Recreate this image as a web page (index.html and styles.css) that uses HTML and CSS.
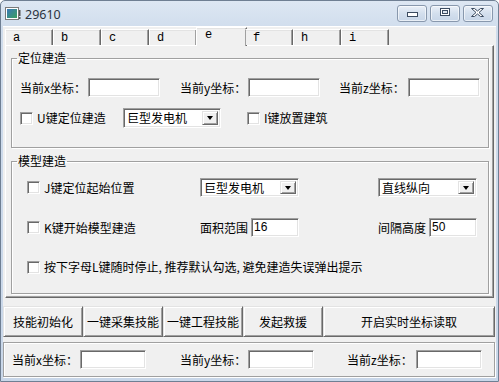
FILE: index.html
```html
<!DOCTYPE html>
<html>
<head>
<meta charset="utf-8">
<link rel="stylesheet" href="styles.css">
</head>
<body>
<div class="window">
  <div class="titlebar">
    <svg class="appicon" width="16" height="14" viewBox="0 0 16 14">
      <rect x="0.5" y="0.5" width="13" height="12" fill="#fff" stroke="#7a7a7a"/>
      <defs><linearGradient id="ig" x1="0" y1="0" x2="1" y2="1"><stop offset="0" stop-color="#3a78b8"/><stop offset="1" stop-color="#3aa060"/></linearGradient></defs>
      <rect x="2" y="2" width="10" height="9" fill="url(#ig)"/>
      <rect x="14" y="3" width="1.5" height="6" fill="#555"/>
      <rect x="14" y="10" width="1.5" height="2" fill="#555"/>
    </svg>
    <span class="title">29610</span>
    <div class="capbtns">
      <div class="capbtn">
        <svg width="30" height="17" viewBox="0 0 30 17"><rect x="10.5" y="7.5" width="10" height="4" fill="#fff" stroke="#3b4b60"/></svg>
      </div>
      <div class="capbtn">
        <svg width="30" height="17" viewBox="0 0 30 17"><rect x="10.5" y="3.5" width="9" height="7" fill="#fff" stroke="#3b4b60"/><rect x="12.5" y="5.5" width="5" height="3" fill="#dfe7f1" stroke="#3b4b60"/></svg>
      </div>
      <div class="capbtn">
        <svg width="30" height="17" viewBox="0 0 30 17"><path d="M8.5 3.5h3l3 2.5 3-2.5h3l-4.5 4 4.5 4h-3l-3-2.5-3 2.5h-3l4.5-4z" fill="#fff" stroke="#3b4b60" stroke-linejoin="round"/></svg>
      </div>
    </div>
  </div>
  <div class="client">
    <div class="tabctl">
      <div class="tabstrip">
        <div class="tab">a</div>
        <div class="tab">b</div>
        <div class="tab">c</div>
        <div class="tab">d</div>
        <div class="tab sel">e</div>
        <div class="tab">f</div>
        <div class="tab">h</div>
        <div class="tab">i</div>
      </div>
      <div class="tabpanel">
        <fieldset class="group g1">
          <legend>定位建造</legend>
          <div class="row r1">
            <span class="lbl l68">当前x坐标：</span><span class="field w72"></span>
            <span class="lbl l68 ml20">当前y坐标：</span><span class="field w72"></span>
            <span class="lbl l69 ml19">当前z坐标：</span><span class="field w72"></span>
          </div>
          <div class="row r2">
            <span class="chk w103"><span class="cb"></span><span class="ctext">U键定位建造</span></span>
            <span class="combo w98"><span class="ctxt">巨型发电机</span><span class="drop"><span class="arr"></span></span></span>
            <span class="chk ml26"><span class="cb"></span><span class="ctext">I键放置建筑</span></span>
          </div>
        </fieldset>
        <fieldset class="group g2">
          <legend>模型建造</legend>
          <div class="row s1">
            <span class="chk w173"><span class="cb"></span><span class="ctext">J键定位起始位置</span></span>
            <span class="combo w99"><span class="ctxt">巨型发电机</span><span class="drop"><span class="arr"></span></span></span>
            <span class="combo w99 ml79"><span class="ctxt">直线纵向</span><span class="drop"><span class="arr"></span></span></span>
          </div>
          <div class="row s2">
            <span class="chk w173"><span class="cb"></span><span class="ctext">K键开始模型建造</span></span>
            <span class="lbl l51">面积范围</span><span class="field w48 val">16</span>
            <span class="lbl l51 ml79">间隔高度</span><span class="field w48 val">50</span>
          </div>
          <div class="row s3">
            <span class="chk"><span class="cb"></span><span class="ctext">按下字母L键随时停止, 推荐默认勾选, 避免建造失误弹出提示</span></span>
          </div>
        </fieldset>
      </div>
    </div>
    <div class="btnrow">
      <div class="btn w80">技能初始化</div>
      <div class="btn w80">一键采集技能</div>
      <div class="btn w80">一键工程技能</div>
      <div class="btn w80">发起救援</div>
      <div class="btn grow">开启实时坐标读取</div>
    </div>
    <div class="coordpanel">
      <span class="lbl l68">当前x坐标：</span><span class="field w66"></span>
      <span class="lbl l68 ml34">当前y坐标：</span><span class="field w66"></span>
      <span class="lbl l69 ml33">当前z坐标：</span><span class="field w66"></span>
    </div>
  </div>
</div>
</body>
</html>
```
FILE: styles.css
```css
* { box-sizing: border-box; }
html, body { margin: 0; padding: 0; }
body {
  width: 499px;
  height: 382px;
  overflow: hidden;
  font-family: "Noto Sans CJK SC", "Noto Sans", sans-serif;
  font-size: 12px;
  color: #000;
  background: #fff;
}
.window {
  width: 499px;
  height: 382px;
  border: 1px solid #6f7f93;
  border-radius: 5px 5px 0 0;
  background: linear-gradient(#dde7f3 0, #cfdcec 30px, #c9d7e9 100%);
  padding: 0 2px 3px 2px;
  display: flex;
  flex-direction: column;
}
.titlebar {
  height: 25px;
  display: flex;
  align-items: center;
}
.appicon { margin-left: 2px; margin-top: 1px; }
.title {
  margin-left: 4px;
  font-family: "Noto Sans", sans-serif;
  font-size: 12.5px;
  color: #2a3340;
  margin-top: 1px;
}
.capbtns {
  margin-left: auto;
  margin-right: 3px;
  display: flex;
  gap: 3px;
  align-self: flex-start;
  margin-top: 4px;
}
.capbtn {
  width: 30px;
  height: 17px;
  border: 1px solid #8898ad;
  border-radius: 3px;
  background: linear-gradient(#eaf0f8, #d3dfed 50%, #c8d6e8);
  box-shadow: inset 0 0 0 1px rgba(255,255,255,0.6);
  position: relative;
}
.capbtn svg { position: absolute; left: -1px; top: -1px; }
.client {
  flex: 1;
  background: #f0f0f0;
  border-top: 1px solid #fff;
  display: flex;
  flex-direction: column;
}
.tabctl { margin-left: 2px; margin-right: 2px; }
.tabstrip {
  height: 18px;
  display: flex;
  align-items: flex-end;
  position: relative;
  z-index: 1;
}
.tab {
  width: 48px;
  height: 16px;
  font-family: "Liberation Mono", monospace;
  font-size: 12px;
  line-height: 17px;
  padding-left: 7px;
  border-top: 1px solid #fff;
  border-left: 1px solid #fff;
  border-right: 1px solid #696969;
  box-shadow: inset -1px 0 #a0a0a0, inset 0 1px #e3e3e3;
  background: #f0f0f0;
}
.tab.sel {
  width: 51px;
  height: 19px;
  margin-left: -1px;
  margin-right: -2px;
  margin-bottom: -1px;
  line-height: 15px;
  padding-left: 8px;
}
.tab.sel + .tab { border-left-color: #a0a0a0; }
.tabpanel {
  border: 1px solid;
  border-color: #fff #696969 #696969 #fff;
  box-shadow: inset -1px -1px #a0a0a0;
  padding: 5px 4px 3px 5px;
}
fieldset.group {
  margin: 0;
  padding: 0;
  border: 1px solid #a0a0a0;
  box-shadow: inset 1px 1px #fff, 1px 1px #fff;
  min-width: 0;
}
fieldset.group legend {
  margin-left: 5px;
  padding: 0 1px;
  font-size: 12px;
  line-height: 14px;
}
.row { display: flex; align-items: center; }
fieldset.g1 { padding: 0 0 19px 0; }
.g1 .row { margin-left: 8px; }
.g1 .r1 { margin-top: 13px; height: 19px; }
.g1 .r2 { margin-top: 11px; height: 20px; }
fieldset.g2 { margin-top: 6px; padding: 0 0 18px 0; }
.g2 .row { margin-left: 15px; }
.g2 .s1 { margin-top: 10px; height: 19px; }
.g2 .s2 { margin-top: 21px; height: 19px; }
.g2 .s3 { margin-top: 22px; height: 16px; }
.lbl { white-space: nowrap; flex: none; line-height: 16px; }
.l68 { width: 68px; }
.l69 { width: 69px; }
.l51 { width: 51px; }
.ml19 { margin-left: 19px; }
.ml20 { margin-left: 20px; }
.ml26 { margin-left: 26px; }
.ml33 { margin-left: 33px; }
.ml34 { margin-left: 34px; }
.ml79 { margin-left: 79px; }
.w48 { width: 48px; }
.w66 { width: 66px; }
.w72 { width: 72px; }
.w98 { width: 98px; }
.w99 { width: 99px; }
.w103 { width: 103px; }
.w173 { width: 173px; }
.field {
  flex: none;
  height: 19px;
  background: #fff;
  border: 1px solid;
  border-color: #a0a0a0 #fff #fff #a0a0a0;
  box-shadow: inset 1px 1px #696969, inset -1px -1px #e3e3e3;
}
.field.val {
  font-family: "Liberation Sans", sans-serif;
  font-size: 12px;
  line-height: 17px;
  padding-left: 2px;
}
.chk { display: flex; align-items: center; flex: none; white-space: nowrap; }
.cb {
  width: 13px;
  height: 13px;
  flex: none;
  background: #fff;
  border: 1px solid;
  border-color: #a0a0a0 #fff #fff #a0a0a0;
  box-shadow: inset 1px 1px #696969, inset -1px -1px #e3e3e3;
}
.ctext { margin-left: 4px; line-height: 16px; }
.combo {
  flex: none;
  height: 20px;
  display: flex;
  align-items: center;
  background: #fff;
  border: 1px solid;
  border-color: #a0a0a0 #fff #fff #a0a0a0;
  box-shadow: inset 1px 1px #696969, inset -1px -1px #e3e3e3;
  padding: 2px 2px 2px 3px;
}
.s1 .combo { height: 19px; }
.ctxt { flex: 1; line-height: 14px; white-space: nowrap; }
.drop {
  width: 16px;
  height: 100%;
  background: #f0f0f0;
  border: 1px solid;
  border-color: #e3e3e3 #696969 #696969 #e3e3e3;
  box-shadow: inset 1px 1px #fff, inset -1px -1px #a0a0a0;
  display: flex;
  align-items: center;
  justify-content: center;
}
.arr {
  width: 0;
  height: 0;
  border-left: 3.5px solid transparent;
  border-right: 3.5px solid transparent;
  border-top: 4px solid #000;
}
.btnrow {
  margin-top: 8px;
  display: flex;
  height: 31px;
  margin-right: 1px;
}
.btn {
  height: 31px;
  flex: none;
  display: flex;
  align-items: center;
  justify-content: center;
  white-space: nowrap;
  font-size: 12px;
  background: #f0f0f0;
  border: 1px solid;
  border-color: #e3e3e3 #696969 #696969 #e3e3e3;
  box-shadow: inset 1px 1px #fff, inset -1px -1px #a0a0a0;
}
.w80 { width: 80px; }
.btn.grow { flex: 1; }
.coordpanel {
  margin-top: 5px;
  margin-right: 1px;
  height: 35px;
  display: flex;
  align-items: center;
  padding-left: 8px;
  border: 1px solid #a0a0a0;
  box-shadow: inset 1px 1px #fff, 1px 1px #fff;
}
```
